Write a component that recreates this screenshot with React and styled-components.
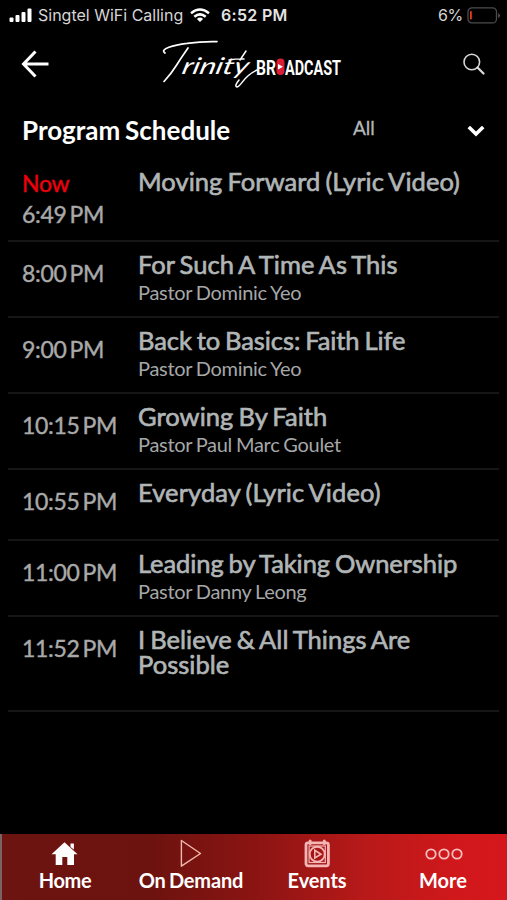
import React from "react";
import styled, { createGlobalStyle } from "styled-components";

const GlobalStyle = createGlobalStyle`
  * { box-sizing: border-box; }
  body { margin: 0; background: #000; }
`;

const Screen = styled.div`
  width: 507px;
  height: 900px;
  display: flex;
  flex-direction: column;
  overflow: hidden;
  background: #000;
  color: #fff;
  font-family: Lato, sans-serif;
`;

const StatusBar = styled.div`
  height: 30px;
  flex: none;
  display: flex;
  align-items: center;
  padding: 0 7px 0 9px;
  font-family: Inter, sans-serif;
  font-size: 16px;
  color: #d6d6d6;
  white-space: nowrap;
`;

const Carrier = styled.span`
  width: 146px;
  margin: 0 6px 0 5px;
`;

const Clock = styled.span`
  flex: 1;
  margin-left: 11px;
  font-weight: 600;
  color: #e4e4e4;
  letter-spacing: 0.3px;
`;

const BatteryLevel = styled.span`
  margin-right: 4px;
  letter-spacing: -0.3px;
`;

const Header = styled.header`
  height: 70px;
  flex: none;
  display: grid;
  grid-template-columns: 154px 1fr 46px;
`;

const IconButton = styled.button`
  border: 0;
  padding: ${(p) => p.$pad};
  background: none;
  display: flex;
  align-items: flex-start;
`;

const LogoDrawing = styled.svg`
  display: block;
  overflow: visible;
`;

const TitleBar = styled.div`
  height: 58px;
  flex: none;
  display: grid;
  grid-template-columns: 331px 114px 1fr;
  padding-left: 22px;
`;

const PageTitle = styled.h1`
  margin: 0;
  padding-top: 15px;
  font-size: 26px;
  line-height: 30px;
  font-weight: 700;
  letter-spacing: 0;
  word-spacing: -1.5px;
`;

const Filter = styled.span`
  padding-top: 16px;
  font-size: 19px;
  line-height: 24px;
  color: #b4b8b9;
  -webkit-text-stroke: 0.3px currentColor;
`;

const ChevronSlot = styled.div`
  padding-top: 23px;
`;

const Schedule = styled.main`
  flex: 1;
  margin: 0 8px;
`;

const Row = styled.div`
  height: ${(p) => p.$height}px;
  display: grid;
  grid-template-columns: 116px 1fr;
  padding-left: 14px;
  border-bottom: 2px solid #161616;
`;

const Times = styled.div`
  padding-top: ${(p) => (p.$live ? 10 : 16)}px;
  font-size: 23px;
  line-height: 31px;
  letter-spacing: -0.3px;
  word-spacing: -2.6px;
  color: #a9a9a9;
  -webkit-text-stroke: 0.4px currentColor;
  white-space: nowrap;
`;

const Live = styled.div`
  color: #f0000c;
`;

const Program = styled.div`
  padding-top: ${(p) => (p.$live ? 11 : 10.5)}px;
`;

const ProgramTitle = styled.h2`
  margin: 0;
  width: 340px;
  font-size: 25.5px;
  line-height: 24.6px;
  font-weight: 400;
  letter-spacing: ${(p) => p.$track}px;
  word-spacing: -1.5px;
  color: #b0b5b6;
  -webkit-text-stroke: 0.65px currentColor;
`;

const Speaker = styled.div`
  margin-top: 3.5px;
  font-size: 20px;
  line-height: 24px;
  letter-spacing: -0.3px;
  word-spacing: -0.9px;
  color: #a5a7a8;
`;

const TabBar = styled.nav`
  height: 66px;
  flex: none;
  display: grid;
  grid-template-columns: repeat(4, 1fr);
  border-left: 2px solid #796365;
  border-right: 1px solid #a32935;
  background: linear-gradient(90deg, #6c1410 0%, #6d130f 30%, #8a1412 50%, #b81919 72%, #d0181b 90%, #d5171c 100%);
`;

const Tab = styled.div`
  display: flex;
  flex-direction: column;
  align-items: center;
  padding-top: 5px;
  font-size: 20px;
  line-height: 24px;
  font-weight: 700;
  letter-spacing: ${(p) => p.$track}px;
  word-spacing: -1.5px;
  white-space: nowrap;
`;

const TabIcon = styled.div`
  height: 29px;
  display: flex;
  align-items: flex-start;
  svg { display: block; }
`;

const Signal = () => (
  <svg width="24" height="16" fill="#fff">
    <rect x="0.5" y="10.5" width="4" height="4.5" rx="1" />
    <rect x="6.5" y="8" width="4" height="7" rx="1" />
    <rect x="12.5" y="5" width="4" height="10" rx="1" />
    <rect x="18.5" y="1.5" width="4" height="13.5" rx="1" />
  </svg>
);

const Wifi = () => (
  <svg width="20" height="15" fill="none" stroke="#fff" strokeWidth="2.5">
    <path d="M1 5.2Q10-2.2 19 5.2" />
    <path d="M4.3 8.8Q10 4 15.7 8.8" />
    <path d="M6.9 10.9Q10 8.2 13.1 10.9L10 14Z" fill="#fff" stroke="none" />
  </svg>
);

const Battery = () => (
  <svg width="33" height="17" fill="none">
    <rect x="1" y="0.9" width="28.5" height="15" rx="4" stroke="#4c4c4c" strokeWidth="1.3" />
    <path d="M31.3 6v5q1.5-1 1.5-2.5T31.3 6Z" fill="#666" />
    <rect x="3" y="4" width="1.8" height="8.5" rx="0.8" fill="#e83a24" />
  </svg>
);

const Logo = () => (
  <LogoDrawing width="192" height="66" viewBox="154 30 192 66" role="img">
    <g fill="#fff">
      <text transform="translate(181 74) skewX(-14)" fontFamily="Lato, sans-serif" fontSize="23" fontStyle="italic" fontWeight="400" textLength="66" lengthAdjust="spacingAndGlyphs">rinity</text>
      <text transform="translate(256 74.5)" fontFamily="Roboto, sans-serif" fontSize="21" fontWeight="700" textLength="20" lengthAdjust="spacingAndGlyphs">BR</text>
      <text transform="translate(285 74.5)" fontFamily="Roboto, sans-serif" fontSize="21" fontWeight="700" textLength="56" lengthAdjust="spacingAndGlyphs">ADCAST</text>
    </g>
    <g fill="none" stroke="#fff" strokeLinecap="round">
      <path d="M165 53C159 49 174 45 187 43.4Q202 41.2 217 41.6M188 48Q181 58 176 66T164 81.5" strokeWidth="1.7" />
      <path d="M229 60Q238 58.5 244 59M246 51L240 60M239 80Q234 86 237 87C242 86 242 77 257 70" strokeWidth="1.5" />
    </g>
    <rect x="276.5" y="58.5" width="8" height="16.5" rx="4" fill="#dc1f35" />
    <path d="M278 64L283 66.8L278 69.6Z" fill="#fff" />
  </LogoDrawing>
);

const HomeIcon = () => (
  <svg width="28" height="27" fill="#fff">
    <path d="M13.5 3.2L26.5 15.3H23V26H16.3V18H11.3V26H4.7V15.3H0.5Z" />
    <path d="M19.5 4.5h3.4v6L19.5 8Z" />
  </svg>
);

const PlayIcon = () => (
  <svg width="24" height="28" fill="none" stroke="#f2b8ad" strokeWidth="1.4" strokeLinejoin="round">
    <path d="M2.4 1.5V27.2L21.5 14.5Z" />
  </svg>
);

const EventsIcon = () => (
  <svg width="28" height="29" fill="none" stroke="#f5b5b5">
    <rect x="3" y="3.8" width="22.4" height="23" rx="2" strokeWidth="2.8" />
    <rect x="6.1" y="7" width="16.2" height="16.5" strokeWidth="1.2" />
    <circle cx="14.2" cy="15.2" r="7.5" strokeWidth="1.9" />
    <path d="M11.8 11.3V19L18 15.2Z" strokeWidth="1.6" />
    <path d="M7.1 1.9V4.5M21.3 1.9V4.5" strokeWidth="3" strokeLinecap="round" />
  </svg>
);

const MoreIcon = () => (
  <svg width="40" height="28" fill="none" stroke="#f8bfc0" strokeWidth="1.8">
    <circle cx="8" cy="15" r="4.7" />
    <circle cx="21" cy="15" r="4.7" />
    <circle cx="34" cy="15" r="4.7" />
  </svg>
);

const programs = [
  { time: "6:49 PM", title: "Moving Forward (Lyric Video)", live: true, height: 83.5, track: 0.04 },
  { time: "8:00 PM", title: "For Such A Time As This", speaker: "Pastor Dominic Yeo", height: 76, track: 0.02 },
  { time: "9:00 PM", title: "Back to Basics: Faith Life", speaker: "Pastor Dominic Yeo", height: 76, track: -0.08 },
  { time: "10:15 PM", title: "Growing By Faith", speaker: "Pastor Paul Marc Goulet", height: 76, track: 0.04 },
  { time: "10:55 PM", title: "Everyday (Lyric Video)", height: 71, track: 0.09 },
  { time: "11:00 PM", title: "Leading by Taking Ownership", speaker: "Pastor Danny Leong", height: 76, track: -0.08 },
  { time: "11:52 PM", title: "I Believe & All Things Are Possible", height: 95, track: 0.02 },
];

const tabs = [
  { label: "Home", Icon: HomeIcon, track: -0.4 },
  { label: "On Demand", Icon: PlayIcon, track: -0.15 },
  { label: "Events", Icon: EventsIcon, track: -0.1 },
  { label: "More", Icon: MoreIcon, track: 0 },
];

export default function App() {
  return (
    <Screen>
      <GlobalStyle />
      <StatusBar>
        <Signal />
        <Carrier>Singtel WiFi Calling</Carrier>
        <Wifi />
        <Clock>6:52 PM</Clock>
        <BatteryLevel>6%</BatteryLevel>
        <Battery />
      </StatusBar>
      <Header>
        <IconButton $pad="20px 0 0 21px" aria-label="Back">
          <svg width="29" height="28" fill="none" stroke="#fff" strokeWidth="3">
            <path d="M14.5 1.5L2.5 14L14.5 26.5M2.5 14H27.5" />
          </svg>
        </IconButton>
        <Logo />
        <IconButton $pad="23px 0 0 2px" aria-label="Search">
          <svg width="24" height="24" fill="none" stroke="#d8d8d8" strokeLinecap="round">
            <circle cx="8.8" cy="9" r="7.8" strokeWidth="1.6" />
            <path d="M14.5 14.5L20.5 20.5" strokeWidth="2.3" />
          </svg>
        </IconButton>
      </Header>
      <TitleBar>
        <PageTitle>Program Schedule</PageTitle>
        <Filter>All</Filter>
        <ChevronSlot>
          <svg width="18" height="13" fill="none" stroke="#fff" strokeWidth="3.6">
            <path d="M1.8 1L9 8L16.2 1" />
          </svg>
        </ChevronSlot>
      </TitleBar>
      <Schedule>
        {programs.map((p) => (
          <Row key={p.time} $height={p.height}>
            <Times $live={p.live}>
              {p.live && <Live>Now</Live>}
              {p.time}
            </Times>
            <Program $live={p.live}>
              <ProgramTitle $track={p.track}>{p.title}</ProgramTitle>
              {p.speaker && <Speaker>{p.speaker}</Speaker>}
            </Program>
          </Row>
        ))}
      </Schedule>
      <TabBar>
        {tabs.map(({ label, Icon, track }) => (
          <Tab key={label} $track={track}>
            <TabIcon><Icon /></TabIcon>
            {label}
          </Tab>
        ))}
      </TabBar>
    </Screen>
  );
}
